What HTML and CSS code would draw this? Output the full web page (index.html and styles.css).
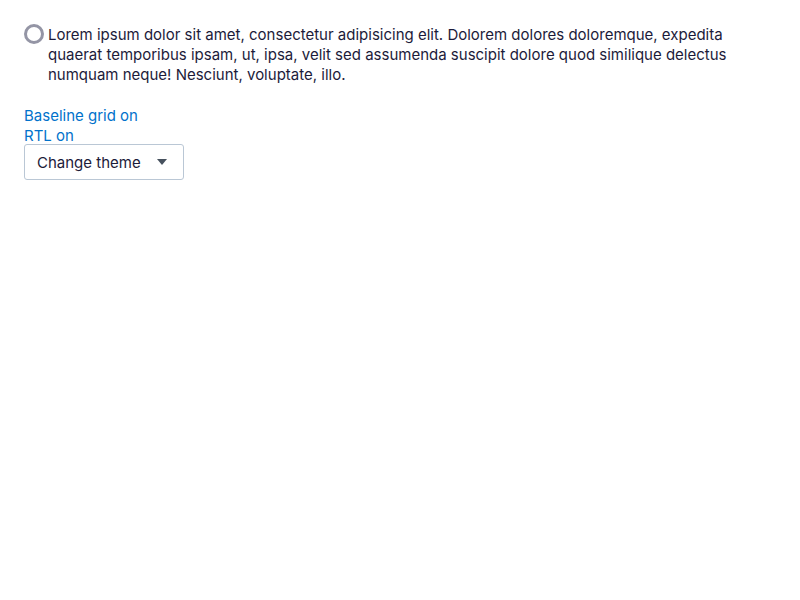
FILE: index.html
```html
<!DOCTYPE html>
<html>
<head>
<meta charset="utf-8">
<link rel="stylesheet" href="styles.css">
</head>
<body>
<div class="page">
  <label class="radio">
    <span class="radio-icon"></span>
    <span class="radio-label">Lorem ipsum dolor sit amet, consectetur adipisicing elit. Dolorem dolores doloremque, expedita quaerat temporibus ipsam, ut, ipsa, velit sed assumenda suscipit dolore quod similique delectus numquam neque! Nesciunt, voluptate, illo.</span>
  </label>
  <div class="controls">
    <a class="link">Baseline grid on</a>
    <a class="link">RTL on</a>
    <button class="select">
      <span>Change theme</span>
      <svg class="caret" width="10" height="6" viewBox="0 0 10 6"><path d="M0 0h10L5 6z" fill="#46515e"/></svg>
    </button>
  </div>
</div>
</body>
</html>
```
FILE: styles.css
```css
html, body { margin: 0; padding: 0; background: #fff; }
body { font-family: Inter, "Noto Sans", sans-serif; color: #1c1b3a; font-size: 15px; line-height: 20px; }
.page { padding: 24px; }
.radio { display: flex; gap: 4px; align-items: flex-start; }
.radio-icon { flex: none; width: 14px; height: 14px; border: 3px solid #9495a5; border-radius: 50%; }
.radio-label { flex: 1; padding-top: 1px; }
.controls { display: flex; flex-direction: column; align-items: flex-start; margin-top: 21px; }
.link { color: #0172cb; cursor: pointer; }
.select { display: flex; align-items: center; justify-content: space-between; width: 160px; height: 36px; margin-top: -2px; padding: 2px 16px 0 12px; border: 1px solid #bac7d5; border-radius: 3px; background: #fff; font: inherit; font-size: 15px; color: #1c1b3a; }
.caret { display: block; margin-top: -2px; }
```
